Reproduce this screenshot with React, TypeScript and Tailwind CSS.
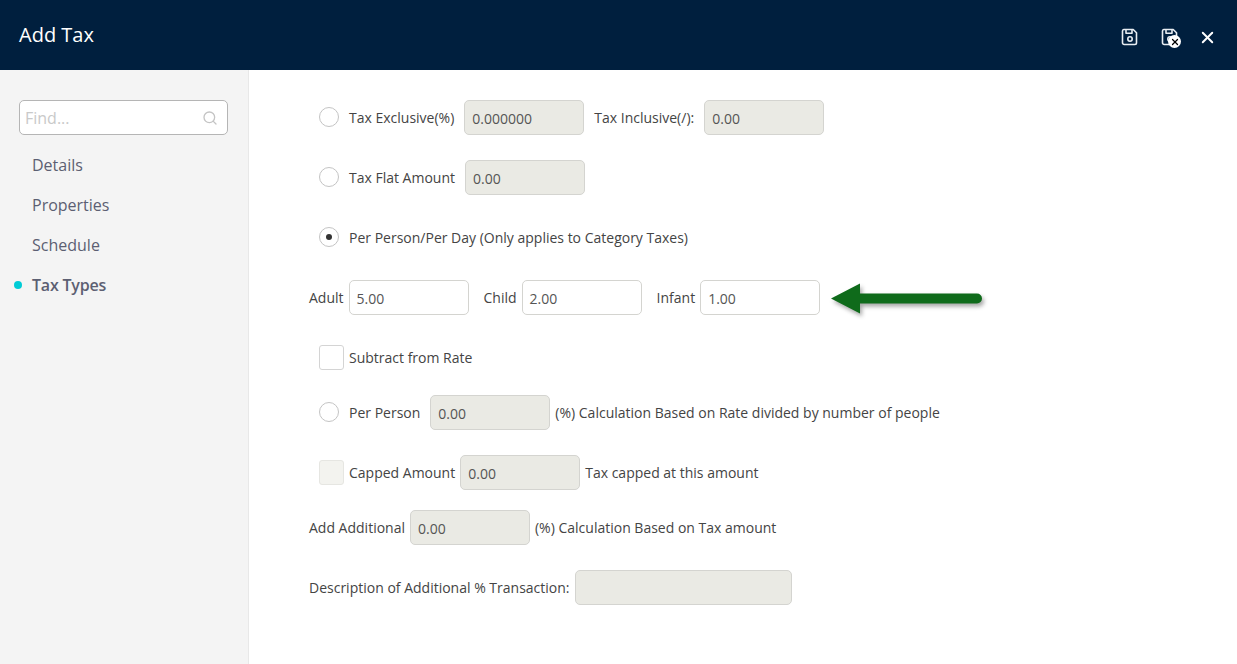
import { Search, X } from 'lucide-react';

const font = { fontFamily: '"Open Sans", sans-serif' };

function Radio({ checked }: { checked?: boolean }) {
  return (
    <span className="flex h-[20px] w-[20px] shrink-0 -translate-y-[1px] items-center justify-center rounded-full border border-[#c4c4c4] bg-white">
      {checked && <span className="h-[6px] w-[6px] rounded-full bg-[#333]" />}
    </span>
  );
}

function Field({ value, disabled, w = 'w-[120px]' }: { value: string; disabled?: boolean; w?: string }) {
  return (
    <div
      className={`flex h-[35px] shrink-0 items-center rounded-[5px] border border-[#d4d4d0] pl-[7px] pt-[2px] text-[14px] text-[#555] ${w} ${
        disabled ? 'bg-[#eaeae4]' : 'bg-white'
      }`}
    >
      {value}
    </div>
  );
}

function SaveIcon({ className }: { className?: string }) {
  return (
    <svg viewBox="0 0 18 18" className={className} fill="none" stroke="currentColor" strokeWidth="1.6" strokeLinejoin="round">
      <path d="M2.8 1.5h9.4l3.3 3.3v10a1.7 1.7 0 0 1-1.7 1.7H3.2a1.7 1.7 0 0 1-1.7-1.7V3a1.5 1.5 0 0 1 1.3-1.5z" />
      <path d="M5 1.8v3.4h6V1.8" />
      <circle cx="9" cy="11" r="2.2" />
    </svg>
  );
}

function Header() {
  return (
    <header className="flex h-[70px] shrink-0 items-center justify-between bg-[#001f3e] pl-[19px] pr-[20px] text-white">
      <h1 className="text-[20px] leading-none" style={font}>Add Tax</h1>
      <div className="flex items-center pt-[4px] text-[#e8edf2]">
        <SaveIcon className="h-[18px] w-[18px]" />
        <div className="relative ml-[22px] h-[18px] w-[18px]">
          <SaveIcon className="h-[18px] w-[18px]" />
          <span className="absolute left-[7px] top-[7px] flex h-[13px] w-[13px] items-center justify-center rounded-full bg-white text-black">
            <X size={10} strokeWidth={3} />
          </span>
        </div>
        <X size={19} strokeWidth={2.4} className="ml-[19px] text-white" />
      </div>
    </header>
  );
}

function Sidebar() {
  const items = ['Details', 'Properties', 'Schedule', 'Tax Types'];
  return (
    <aside className="w-[249px] shrink-0 border-r border-[#e8e8e8] bg-[#f4f4f4] pl-[19px] pr-[20px] pt-[30px]">
      <div className="flex h-[35px] w-[209px] items-center justify-between rounded-[5px] border border-[#b5b5b5] bg-white pl-[5px] pr-[9px]">
        <span className="text-[16px] text-[#c9c9c9]">Find...</span>
        <Search size={16} className="text-[#c4c4c4]" />
      </div>
      <nav className="mt-[10px] flex flex-col">
        {items.map((item) => {
          const active = item === 'Tax Types';
          return (
            <div key={item} className="relative flex h-[40px] items-center pl-[13px] text-[16px] text-[#5c5f72]">
              {active && <span className="absolute left-[-5px] h-[8px] w-[8px] rounded-full bg-[#00ccd6]" />}
              <span className={active ? 'font-semibold tracking-[-0.2px]' : ''}>{item}</span>
            </div>
          );
        })}
      </nav>
    </aside>
  );
}

function GreenArrow() {
  return (
    <svg viewBox="0 0 156 40" className="ml-[8px] h-[40px] w-[156px] shrink-0 drop-shadow-[2px_3px_2px_rgba(0,0,0,0.35)]">
      <path d="M3 20.5 L32 5.5 V15.5 H149 a5 5 0 0 1 0 10 H32 V35.5 Z" fill="#0f6b1b" />
    </svg>
  );
}

export default function App() {
  return (
    <div className="flex h-screen w-full flex-col overflow-hidden bg-white text-[14px] text-[#444]" style={font}>
      <Header />
      <div className="flex min-h-0 flex-1">
        <Sidebar />
        <main className="flex-1 pl-[60px] pt-[30px]">
          <div className="flex h-[35px] items-center pl-[10px]">
            <Radio />
            <span className="ml-[10px]">Tax Exclusive(%)</span>
            <div className="ml-[10px]"><Field value="0.000000" disabled /></div>
            <span className="ml-[10px]">Tax Inclusive(/):</span>
            <div className="ml-[10px]"><Field value="0.00" disabled /></div>
          </div>

          <div className="mt-[25px] flex h-[35px] items-center pl-[10px]">
            <Radio />
            <span className="ml-[10px]">Tax Flat Amount</span>
            <div className="ml-[10px]"><Field value="0.00" disabled /></div>
          </div>

          <div className="mt-[25px] flex h-[35px] items-center pl-[10px]">
            <Radio checked />
            <span className="ml-[10px]">Per Person/Per Day (Only applies to Category Taxes)</span>
          </div>

          <div className="mt-[25px] flex h-[35px] items-center">
            <span>Adult</span>
            <div className="ml-[5px]"><Field value="5.00" /></div>
            <span className="ml-[15px]">Child</span>
            <div className="ml-[5px]"><Field value="2.00" /></div>
            <span className="ml-[15px]">Infant</span>
            <div className="ml-[5px]"><Field value="1.00" /></div>
            <GreenArrow />
          </div>

          <div className="mt-[25px] flex h-[35px] items-center pl-[10px]">
            <span className="h-[25px] w-[25px] shrink-0 rounded-[3px] border border-[#d4d4d4] bg-white" />
            <span className="ml-[5px]">Subtract from Rate</span>
          </div>

          <div className="mt-[20px] flex h-[35px] items-center pl-[10px]">
            <Radio />
            <span className="ml-[10px]">Per Person</span>
            <div className="ml-[10px]"><Field value="0.00" disabled /></div>
            <span className="ml-[5px]">(%) Calculation Based on Rate divided by number of people</span>
          </div>

          <div className="mt-[25px] flex h-[35px] items-center pl-[10px]">
            <span className="h-[25px] w-[25px] shrink-0 rounded-[3px] border border-[#e6e6e2] bg-[#f3f3ef]" />
            <span className="ml-[5px]">Capped Amount</span>
            <div className="ml-[5px]"><Field value="0.00" disabled /></div>
            <span className="ml-[5px]">Tax capped at this amount</span>
          </div>

          <div className="mt-[20px] flex h-[35px] items-center">
            <span>Add Additional</span>
            <div className="ml-[5px]"><Field value="0.00" disabled /></div>
            <span className="ml-[5px]">(%) Calculation Based on Tax amount</span>
          </div>

          <div className="mt-[25px] flex h-[35px] items-center">
            <span>Description of Additional % Transaction:</span>
            <div className="ml-[5px]"><Field value="" disabled w="w-[217px]" /></div>
          </div>
        </main>
      </div>
    </div>
  );
}
